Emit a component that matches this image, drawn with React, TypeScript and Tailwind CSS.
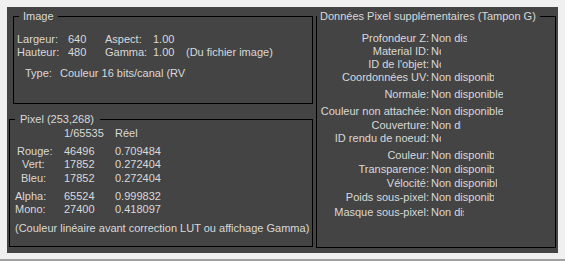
const TEXT = "text-[#d9d9d9]";

const extraRows = [
    { label: "Profondeur Z:", value: "Non disponible", w: "w-[36px]", mt: "mt-[9px]" },
    { label: "Material ID:", value: "Non disponible", w: "w-[10px]", mt: "mt-0" },
    { label: "ID de l'objet:", value: "Non disponible", w: "w-[10px]", mt: "mt-0" },
    { label: "Coordonnées UV:", value: "Non disponible", w: "w-[63px]", mt: "mt-0" },
    { label: "Normale:", value: "Non disponible", w: "w-[72px]", mt: "mt-[4px]" },
    { label: "Couleur non attachée:", value: "Non disponible", w: "w-[72px]", mt: "mt-[4px]" },
    { label: "Couverture:", value: "Non disponible", w: "w-[30px]", mt: "mt-[1px]" },
    { label: "ID rendu de noeud:", value: "Non disponible", w: "w-[10px]", mt: "mt-0" },
    { label: "Couleur:", value: "Non disponible", w: "w-[63px]", mt: "mt-[4px]" },
    { label: "Transparence:", value: "Non disponible", w: "w-[63px]", mt: "mt-[1px]" },
    { label: "Vélocité:", value: "Non disponible", w: "w-[66px]", mt: "mt-[1px]" },
    { label: "Poids sous-pixel:", value: "Non disponible", w: "w-[63px]", mt: "mt-[1px]" },
    { label: "Masque sous-pixel:", value: "Non disponible", w: "w-[33px]", mt: "mt-[2px]" },
];

const channelRows = [
    { label: "Rouge:", pl: "pl-[7px]", a: "46496", b: "0.709484", mt: "mt-[5px]" },
    { label: "Vert:", pl: "pl-[12px]", a: "17852", b: "0.272404", mt: "mt-0" },
    { label: "Bleu:", pl: "pl-[11px]", a: "17852", b: "0.272404", mt: "mt-[1px]" },
    { label: "Alpha:", pl: "pl-[5px]", a: "65524", b: "0.999832", mt: "mt-[5px]" },
    { label: "Mono:", pl: "pl-[5px]", a: "27400", b: "0.418097", mt: "mt-0" },
];

export default function App() {
    return (
        <div className={`w-[565px] h-[261px] bg-[#f0f0f0] border-b-2 border-[#a0a0a0] px-[7px] pt-[7px] font-['Liberation_Sans',Arial,sans-serif] text-[11px] leading-[13px] ${TEXT}`}>
            <div className="h-[246px] bg-[#444444] flex">
                {/* left column */}
                <div className="w-[306px] flex flex-col">
                    <fieldset className="ml-[6px] mt-[3px] w-[300px] h-[94px] border border-black">
                        <legend className="ml-[5px] px-[4px] leading-[13px]">Image</legend>
                        <div className="mt-[10px] pl-[3px] flex whitespace-nowrap">
                            <span className="w-[51px]">Largeur:</span>
                            <span className="w-[37px]">640</span>
                            <span className="w-[48px]">Aspect:</span>
                            <span className="w-[33px]">1.00</span>
                        </div>
                        <div className="pl-[3px] flex whitespace-nowrap">
                            <span className="w-[51px]">Hauteur:</span>
                            <span className="w-[37px]">480</span>
                            <span className="w-[48px]">Gamma:</span>
                            <span className="w-[33px]">1.00</span>
                            <span>(Du fichier image)</span>
                        </div>
                        <div className="mt-[8px] pl-[11px] flex whitespace-nowrap">
                            <span className="w-[35px]">Type:</span>
                            <span className="w-[126px] overflow-hidden">Couleur 16 bits/canal (RVB)</span>
                        </div>
                    </fieldset>

                    <fieldset className="ml-[2px] mt-[9px] w-[304px] h-[134px] border border-black">
                        <legend className="ml-[5px] pl-[5px] pr-[6px] leading-[13px]">Pixel (253,268)</legend>
                        <div className="mt-[1px] flex whitespace-nowrap">
                            <span className="ml-[54px] w-[51px]">1/65535</span>
                            <span>Réel</span>
                        </div>
                        {channelRows.map(r => (
                            <div key={r.label} className={`${r.mt} flex whitespace-nowrap`}>
                                <span className={`${r.pl} w-[54px]`}>{r.label}</span>
                                <span className="w-[51px]">{r.a}</span>
                                <span>{r.b}</span>
                            </div>
                        ))}
                        <div className="mt-[6px] pl-[5px] whitespace-nowrap">
                            (Couleur linéaire avant correction LUT ou affichage Gamma)
                        </div>
                    </fieldset>
                </div>

                {/* right column */}
                <fieldset className="ml-[3px] mt-[3px] w-[240px] h-[238px] border border-black">
                    <legend className="pl-[3px] pr-[4px] leading-[13px] whitespace-nowrap">Données Pixel supplémentaires (Tampon G)</legend>
                    {extraRows.map(r => (
                        <div key={r.label} className={`${r.mt} flex whitespace-nowrap`}>
                            <div className="w-[112px] flex justify-end">
                                <span className="bg-[#444444]">{r.label}</span>
                            </div>
                            <span className={`ml-[2px] ${r.w} overflow-hidden`}>{r.value}</span>
                        </div>
                    ))}
                </fieldset>
            </div>
        </div>
    );
}
